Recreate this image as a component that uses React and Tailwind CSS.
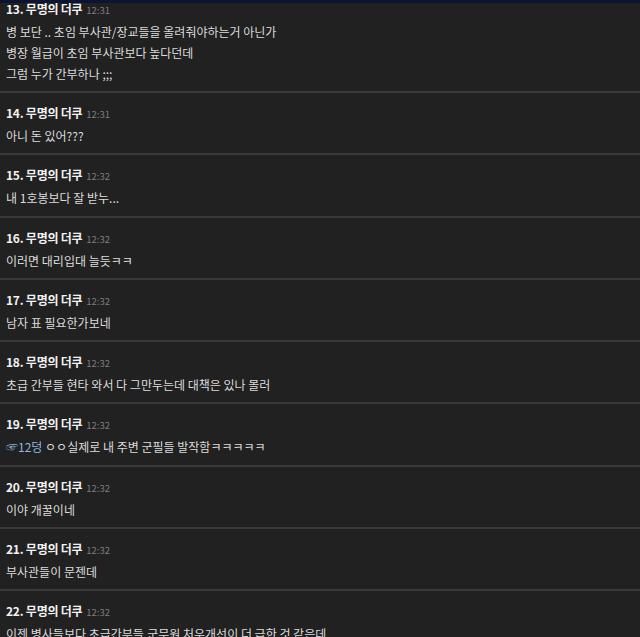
import React from "react";

const comments = [
  { no: 13, time: "12:31", lines: ["병 보단 .. 초임 부사관/장교들을 올려줘야하는거 아닌가", "병장 월급이 초임 부사관보다 높다던데", "그럼 누가 간부하나 ;;;"] },
  { no: 14, time: "12:31", lines: ["아니 돈 있어???"] },
  { no: 15, time: "12:32", lines: ["내 1호봉보다 잘 받누..."] },
  { no: 16, time: "12:32", lines: ["이러면 대리입대 늘듯ㅋㅋ"] },
  { no: 17, time: "12:32", lines: ["남자 표 필요한가보네"] },
  { no: 18, time: "12:32", lines: ["초급 간부들 현타 와서 다 그만두는데 대책은 있나 몰러"] },
  { no: 19, time: "12:32", reply: "☞12덩", lines: [" ㅇㅇ실제로 내 주변 군필들 발작함ㅋㅋㅋㅋㅋ"] },
  { no: 20, time: "12:32", lines: ["이야 개꿀이네"] },
  { no: 21, time: "12:32", lines: ["부사관들이 문젠데"] },
  { no: 22, time: "12:32", lines: ["이젠 병사들보다 초급간부들,군무원 처우개선이 더 급한 것 같은데"] },
];

function Comment({ c, first }) {
  return (
    <div className={`border-b-2 border-[#393939] px-[6px] pb-[7.3px] ${first ? "pt-0" : "pt-[10px]"}`}>
      <div className="flex items-baseline h-5 leading-5">
        <span className="text-[12px] font-bold tracking-[-0.02em] text-[#f2f2f2]">
          {c.no}. 무명의 더쿠
        </span>
        <span className="ml-[4px] text-[9.5px] text-[#7d7d7d]">{c.time}</span>
      </div>
      <div className="mt-[2px] text-[12px] leading-[21px] text-[#dcdcdc]">
        {c.lines.map((l, i) => (
          <div key={i} className="whitespace-nowrap">
            {i === 0 && c.reply && <span className="text-[#8fb6df]">{c.reply}</span>}
            {l}
          </div>
        ))}
      </div>
    </div>
  );
}

export default function App() {
  return (
    <div
      className="w-[640px] h-[637px] overflow-hidden bg-[#212121]"
      style={{ fontFamily: '"Noto Sans CJK KR", "Noto Sans", sans-serif' }}
    >
      <div className="h-[3px] bg-[#0b1530]" />
      <div className="-mt-[4.3px]">
        {comments.map((c, i) => (
          <Comment key={c.no} c={c} first={i === 0} />
        ))}
      </div>
    </div>
  );
}
